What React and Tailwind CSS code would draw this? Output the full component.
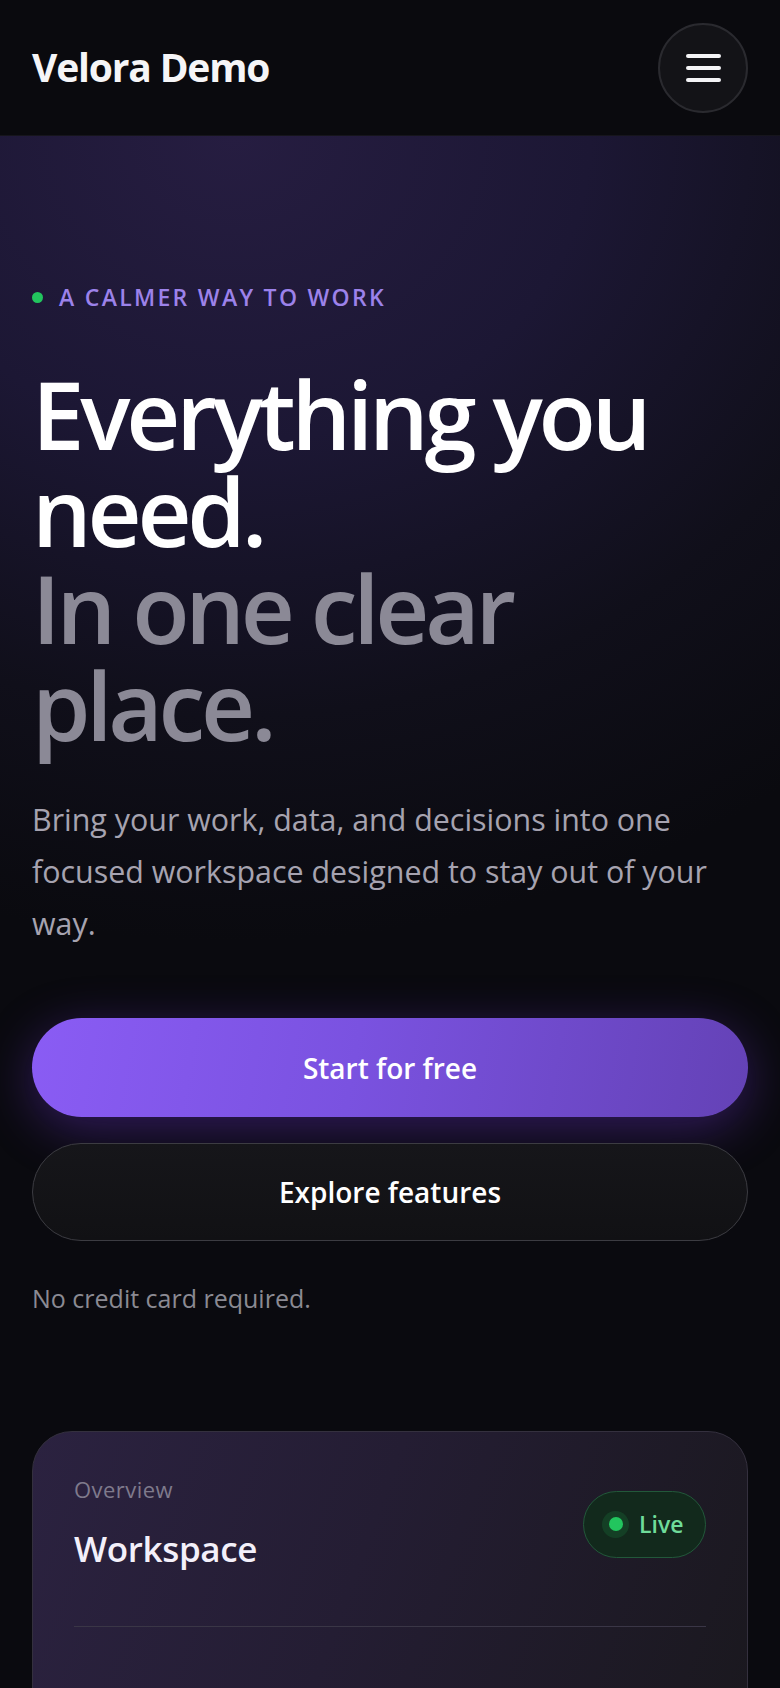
import React from "react";

export default function App() {
  const font = { fontFamily: '"Open Sans", "Noto Sans", sans-serif' };
  return (
    <div style={font} className="min-h-[1688px] w-full bg-[#0a0a0f] text-white overflow-hidden">
      <header className="h-[136px] flex items-center justify-between pl-[32px] pr-[32px] bg-[#0a0a0e] border-b border-[#16151c]">
        <div className="text-[39px] font-bold tracking-[-0.03em] text-[#f5f5f7]">Velora Demo</div>
        <button className="w-[90px] h-[90px] rounded-full border-2 border-[#2a2a2f] bg-[#131317] flex flex-col items-center justify-center gap-[8px]">
          <span className="block w-[35px] h-[4px] rounded-full bg-[#f4f4f6]" />
          <span className="block w-[35px] h-[4px] rounded-full bg-[#f4f4f6]" />
          <span className="block w-[35px] h-[4px] rounded-full bg-[#f4f4f6]" />
        </button>
      </header>

      <section className="px-[32px] pt-[146px] pb-[120px] bg-[radial-gradient(ellipse_120%_62%_at_30%_0%,#261d41_0%,#1c1734_38%,#100f1a_72%,#0a0a0f_100%)]">
        <div className="flex items-center gap-[16px]">
          <span className="w-[11px] h-[11px] rounded-full bg-[#22c55e]" />
          <span className="text-[23px] leading-[30px] font-semibold tracking-[0.1em] text-[#9c82ea]">A CALMER WAY TO WORK</span>
        </div>
        <h1 className="mt-[54px] text-[94px] leading-[97px] font-semibold tracking-[-0.045em]">
          <span className="block text-white">Everything you<br />need.</span>
          <span className="block text-[#8b8996]">In one clear<br />place.</span>
        </h1>
        <p className="mt-[40px] text-[30.4px] leading-[52px] text-[#a6a3b0]">
          Bring your work, data, and decisions into one focused workspace designed to stay out of your way.
        </p>
        <div className="mt-[68px] flex flex-col gap-[26px]">
          <button className="h-[99px] rounded-full bg-[linear-gradient(100deg,#8a5cf4_0%,#7a52e0_45%,#6442b6_100%)] shadow-[0_12px_50px_rgba(124,58,237,0.35)] text-[28px] font-semibold text-white">
            Start for free
          </button>
          <button className="h-[98px] rounded-full border border-[#3c3c42] bg-[linear-gradient(180deg,#16161a_0%,#111114_100%)] text-[28px] font-semibold text-white">
            Explore features
          </button>
        </div>
        <p className="mt-[40px] text-[25px] leading-[34px] text-[#8b8a93]">No credit card required.</p>
      </section>

      <div className="px-[32px] -mt-[4px]">
        <div className="rounded-[40px] border border-[#34303e] bg-[linear-gradient(110deg,#2b2240_0%,#241d33_45%,#1a181e_100%)] px-[41px] pt-[42px] pb-[120px]">
          <div className="flex items-center justify-between">
            <div>
              <div className="text-[22px] leading-[30px] tracking-[0.02em] text-[#7f7a8c]">Overview</div>
              <div className="mt-[21px] text-[35px] leading-[48px] font-semibold tracking-[-0.01em] text-[#f3f0fa]">Workspace</div>
            </div>
            <div className="mt-[1px] h-[67px] w-[123px] rounded-full border border-[#22583a] bg-[#12291c] flex items-center pl-[18px] gap-[10px]">
              <span className="w-[27px] h-[27px] rounded-full bg-[rgba(34,197,94,0.15)] flex items-center justify-center">
                <span className="w-[14px] h-[14px] rounded-full bg-[#22c55e]" />
              </span>
              <span className="text-[23px] font-semibold text-[#6fdc9a]">Live</span>
            </div>
          </div>
          <div className="mt-[53px] h-px bg-[#3a3646]" />
        </div>
      </div>
    </div>
  );
}
